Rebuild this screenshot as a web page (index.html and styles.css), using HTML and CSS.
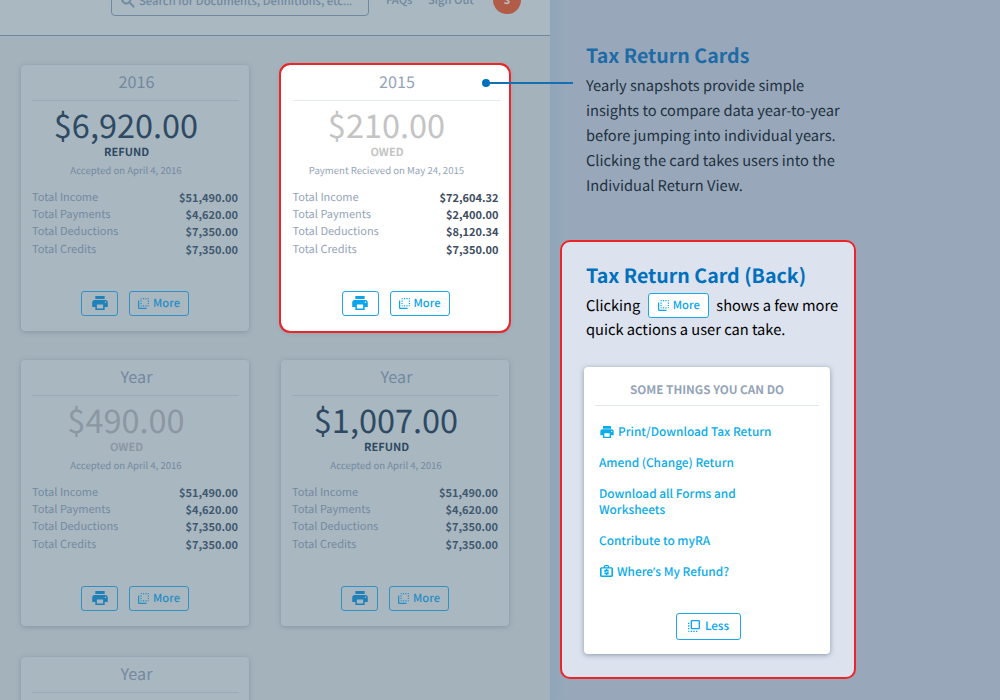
FILE: index.html
```
<!DOCTYPE html>
<html lang="en">
<head>
<meta charset="utf-8">
<title>Tax Return Cards</title>
<link rel="stylesheet" href="styles.css">
</head>
<body>
<svg class="sprite" xmlns="http://www.w3.org/2000/svg">
  <symbol id="print" viewBox="2 3 20 18"><path d="M19 8H5c-1.66 0-3 1.34-3 3v6h4v4h12v-4h4v-6c0-1.66-1.34-3-3-3zm-3 11H8v-5h8v5zm3-7c-.55 0-1-.45-1-1s.45-1 1-1 1 .45 1 1-.45 1-1 1zm-1-9H6v4h12V3z"/></symbol>
  <symbol id="back" viewBox="3 3 18 18"><path d="M9 7H7v2h2V7zm0 4H7v2h2v-2zm0-8c-1.11 0-2 .9-2 2h2V3zm4 12h-2v2h2v-2zm6-12v2h2c0-1.1-.9-2-2-2zm-6 0h-2v2h2V3zM9 17v-2H7c0 1.1.89 2 2 2zm10-4h2v-2h-2v2zm0-4h2V7h-2v2zm0 8c1.1 0 2-.9 2-2h-2v2zM5 7H3v12c0 1.1.89 2 2 2h12v-2H5V7zm10-2h2V3h-2v2zm0 12h2v-2h-2v2z"/></symbol>
  <symbol id="front" viewBox="3 3 18 18"><path d="M3 13h2v-2H3v2zm0 4h2v-2H3v2zm2 4v-2H3c0 1.1.89 2 2 2zM3 9h2V7H3v2zm12 12h2v-2h-2v2zm4-18H9c-1.11 0-2 .9-2 2v10c0 1.1.89 2 2 2h10c1.1 0 2-.9 2-2V5c0-1.1-.9-2-2-2zm0 12H9V5h10v10zm-8 6h2v-2h-2v2zm-4 0h2v-2H7v2z"/></symbol>
  <symbol id="search" viewBox="2.500 2.500 18.500 18.500"><path stroke="currentColor" stroke-width=".7" d="M15.500 14h-.79l-.28-.27A6.470 6.470 0 0 0 16 9.500 6.500 6.500 0 1 0 9.500 16c1.610 0 3.090-.59 4.230-1.570l.27.28v.79l5 4.990L20.490 19l-4.990-5zm-6 0C7.010 14 5 11.990 5 9.500S7.010 5 9.500 5 14 7.010 14 9.500 11.990 14 9.500 14z"/></symbol>
  <symbol id="refund" viewBox="0 0 24 22"><path fill-rule="evenodd" d="M7 4V2l2-2h6l2 2v2h5l2 2v14l-2 2H2l-2-2V6l2-2zM9.500 2v2h5V2zM3 6.500v13h18v-13z"/><path d="M11 7h2.500v1.500h2.500v2.300h-5v1h5v5.200h-2.500V19H11v-2H8v-2.300h5.200v-1H8V8.500h3z"/></symbol>
</svg>
<main class="page">
  <section class="app">
    <header class="topbar">
      <div class="search"><svg class="i-search"><use href="#search"/></svg><span>Search for Documents, Definitions, etc<span class="lat">…</span></span></div>
      <span class="nav faqs">FAQs</span>
      <span class="nav signout">Sign Out</span>
      <span class="avatar">3</span>
    </header>
    <div class="row">
      <article class="card">
        <h2 class="year">2016</h2>
        <div class="amount">$6,920.00</div><div class="status">REFUND</div><div class="note">Accepted on April 4, 2016</div>
        <dl class="totals"><dt>Total Income</dt><dd>$51,490.00</dd><dt>Total Payments</dt><dd>$4,620.00</dd><dt>Total Deductions</dt><dd>$7,350.00</dd><dt>Total Credits</dt><dd>$7,350.00</dd></dl>
        <div class="actions"><span class="btn print"><svg class="i-print"><use href="#print"/></svg></span><span class="btn more"><svg class="i-back"><use href="#back"/></svg>More</span></div>
      </article>
      <article class="card featured owed">
        <h2 class="year">2015</h2>
        <div class="amount">$210.00</div><div class="status">OWED</div><div class="note">Payment Recieved on May 24, 2015</div>
        <dl class="totals"><dt>Total Income</dt><dd>$72,604.32</dd><dt>Total Payments</dt><dd>$2,400.00</dd><dt>Total Deductions</dt><dd>$8,120.34</dd><dt>Total Credits</dt><dd>$7,350.00</dd></dl>
        <div class="actions"><span class="btn print"><svg class="i-print"><use href="#print"/></svg></span><span class="btn more"><svg class="i-back"><use href="#back"/></svg>More</span></div>
        <i class="pointer"></i>
      </article>
    </div>
    <div class="row">
      <article class="card owed">
        <h2 class="year">Year</h2>
        <div class="amount">$490.00</div><div class="status">OWED</div><div class="note">Accepted on April 4, 2016</div>
        <dl class="totals"><dt>Total Income</dt><dd>$51,490.00</dd><dt>Total Payments</dt><dd>$4,620.00</dd><dt>Total Deductions</dt><dd>$7,350.00</dd><dt>Total Credits</dt><dd>$7,350.00</dd></dl>
        <div class="actions"><span class="btn print"><svg class="i-print"><use href="#print"/></svg></span><span class="btn more"><svg class="i-back"><use href="#back"/></svg>More</span></div>
      </article>
      <article class="card">
        <h2 class="year">Year</h2>
        <div class="amount">$1,007.00</div><div class="status">REFUND</div><div class="note">Accepted on April 4, 2016</div>
        <dl class="totals"><dt>Total Income</dt><dd>$51,490.00</dd><dt>Total Payments</dt><dd>$4,620.00</dd><dt>Total Deductions</dt><dd>$7,350.00</dd><dt>Total Credits</dt><dd>$7,350.00</dd></dl>
        <div class="actions"><span class="btn print"><svg class="i-print"><use href="#print"/></svg></span><span class="btn more"><svg class="i-back"><use href="#back"/></svg>More</span></div>
      </article>
    </div>
    <div class="row last">
      <article class="card"><h2 class="year">Year</h2></article>
    </div>
  </section>
  <aside class="side">
    <div class="intro">
      <h1 class="title">Tax Return Cards</h1>
      <p class="body">Yearly snapshots provide simple<br>insights to compare data year-to-year<br>before jumping into individual years.<br>Clicking the card takes users into the<br>Individual Return View.</p>
    </div>
    <div class="panel">
      <h1 class="title">Tax Return Card (Back)</h1>
      <div class="body inline"><span>Clicking</span><span class="btn more"><svg class="i-back"><use href="#back"/></svg>More</span><span>shows a few more</span></div>
      <div class="body second">quick actions a user can take.</div>
      <div class="backcard">
        <h3 class="heading">SOME THINGS YOU CAN DO</h3>
        <ul class="links">
          <li><svg class="i-lprint"><use href="#print"/></svg>Print/Download Tax Return</li>
          <li>Amend (Change) Return</li>
          <li>Download all Forms and<br>Worksheets</li>
          <li>Contribute to myRA</li>
          <li><svg class="i-refund"><use href="#refund"/></svg>Where<span class="lat">’</span>s My Refund?</li>
        </ul>
        <span class="btn less"><svg class="i-front"><use href="#front"/></svg>Less</span>
      </div>
    </div>
  </aside>
</main>
</body>
</html>
```
FILE: styles.css
```
* { box-sizing: border-box; margin: 0; padding: 0; }
body { font-family: "Noto Sans CJK SC", "Noto Sans", sans-serif; width: 1000px; height: 700px; overflow: hidden; background: #98a8ba; text-rendering: geometricPrecision; }
.sprite { position: absolute; width: 0; height: 0; }
.lat { font-family: "Noto Sans", sans-serif; line-height: 1; }
svg { fill: currentColor; flex: none; }
.page { display: flex; height: 700px; overflow: hidden; }
.app { width: 550px; flex: none; background: #a4b2bb; }
.topbar { height: 36px; background: #a9b8c1; border-bottom: 1px solid #7189a0; display: flex; align-items: flex-start; padding-left: 111px; color: #7189a0; margin-bottom: 29px; }
.search { width: 258px; height: 36px; margin-top: -20px; border: 1px solid #7189a0; border-radius: 4px; display: flex; align-items: center; padding-left: 9px; font-size: 11.200px; font-weight: 500; line-height: 16px; white-space: nowrap; padding-top: 6px; }
.i-search { width: 14px; height: 14px; margin-right: 4px; }
.nav { font-size: 11.200px; font-weight: 500; line-height: 16px; margin-top: -8px; white-space: nowrap; }
.faqs { margin-left: 17px; width: 42px; }
.signout { width: 65px; }
.avatar { width: 28px; height: 28px; border-radius: 50%; background: #b05c47; color: #b9c4cc; font-size: 11px; font-weight: 700; line-height: 28px; text-align: center; margin-top: -14px; }
.row { display: flex; gap: 32px; padding-left: 21px; margin-bottom: 29px; }
.row + .row { margin-bottom: 31px; }
.card { width: 228px; height: 266px; background: #a9b7c1; border-radius: 4px; box-shadow: 0 1px 5px rgba(70, 95, 120, .35); padding: 0 10px 0 11px; color: #2e4a62; }
.year { height: 36px; border-bottom: 1px solid #98a9b7; font-size: 16.200px; font-weight: 400; line-height: 33px; text-align: center; color: #7389a0; padding-left: 2px; }
.amount { width: 188px; height: 42px; margin-top: 3px; font-size: 32.500px; font-weight: 400; line-height: 41px; text-align: center; }
.status { width: 189px; font-size: 11px; font-weight: 700; line-height: 14px; margin-top: -1px; text-align: center; }
.note { width: 188px; font-size: 9.600px; line-height: 14px; margin-top: 4px; text-align: center; color: #7389a0; white-space: nowrap; }
.totals { display: grid; grid-template-columns: 1fr auto; grid-auto-rows: 17.200px; margin-top: 12px; padding-right: 1px; font-size: 11px; line-height: 17px; }
.totals dt { color: #7389a0; font-weight: 400; }
.totals dd { color: #41596f; font-weight: 700; text-align: right; padding-top: 1px; font-size: 11px; }
.actions { display: flex; gap: 11px; margin-top: 33px; padding-left: 49px; }
.btn { display: inline-flex; align-items: center; justify-content: center; height: 25px; border: 1px solid #3190c4; border-radius: 3px; color: #268ec3; font-size: 11.200px; font-weight: 500; line-height: 16px; padding-bottom: 1px; }
.btn.print { width: 37px; color: #2080b8; }
.btn.more { width: 60px; gap: 4px; }
.i-print { width: 16px; height: 14px; }
.i-back { width: 11px; height: 11px; position: relative; top: 1px; }
.owed .amount, .owed .status { color: #8b98a1; }
.featured { position: relative; background: #fff; padding: 0 9.500px 0 11.500px; outline: 2px solid #ed2529; border-radius: 9px; }
.featured .year { border-color: #e3e9ef; color: #94a4b8; }
.featured .amount, .featured .status { color: #c4c4c4; }
.featured .note, .featured .totals dt { color: #94a4b8; }
.featured .totals dd { color: #3e4d60; }
.featured .btn, .side .btn { color: #0aa5ec; border-color: #1ba8e8; background: #fff; }
.pointer { position: absolute; left: 205px; top: 17px; width: 87px; height: 2px; background: #1470b2; }
.pointer::before { content: ""; position: absolute; left: -4px; top: -3px; width: 8px; height: 8px; border-radius: 50%; background: #006fbe; }
.side { flex: 1; background: linear-gradient(90deg, #90a5ba 0, #98a8ba 16px); padding: 41px 0 0 10px; }
.intro { padding-left: 26px; height: 199px; }
.title { font-size: 19.600px; line-height: 28px; font-weight: 700; color: #0070bc; white-space: nowrap; }
.intro .title { color: #1f6ba5; }
.body { font-size: 14.650px; line-height: 25.200px; color: #000; white-space: nowrap; }
.intro .body { color: #21313f; margin-top: 3.500px; }
.panel { width: 296px; height: 439px; border: 2px solid #ed2529; border-radius: 10px; background: #dce2ee; padding: 19px 0 0 24px; }
.inline { display: flex; align-items: center; margin-top: 3px; height: 26px; }
.inline > span:not(.btn) { padding-top: 1px; }
.inline .btn { margin: 0 7px 0 8px; width: 61px; }
.second { line-height: 24px; }
.backcard { width: 246px; height: 287px; margin: 24.500px 0 0 -2px; background: #fff; border-radius: 4px; box-shadow: 0 1px 5px rgba(60, 80, 105, .5); padding: 0 11px; display: flex; flex-direction: column; }
.heading { height: 39px; line-height: 46px; font-size: 11.700px; font-weight: 700; color: #94a4b8; text-align: center; border-bottom: 1px solid #e2e7ed; }
.links { list-style: none; padding: 18px 0 0 4px; color: #0aace9; font-size: 11.850px; font-weight: 500; line-height: 16px; }
.links li { margin-bottom: 15px; white-space: nowrap; }
.i-lprint { width: 14px; height: 12px; margin: 0 4px 0 1px; vertical-align: -2px; }
.i-refund { width: 13px; height: 12px; margin: 0 4px 0 1px; vertical-align: -1px; }
.btn.less { width: 65px; height: 27px; gap: 5px; margin: 18px 0 0 81px; font-size: 11.700px; }
.i-front { width: 12px; height: 12px; }
```
